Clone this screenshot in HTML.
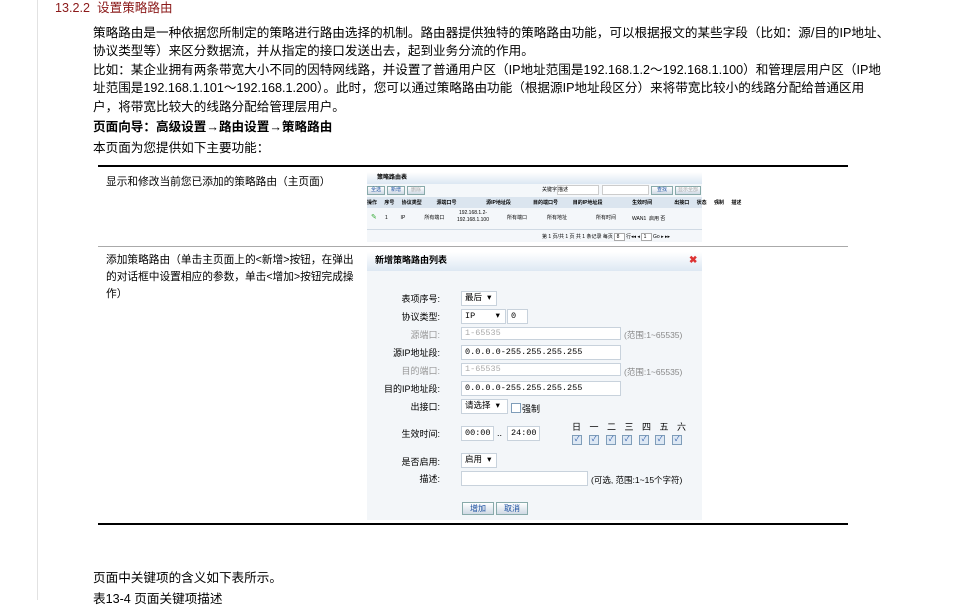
<!DOCTYPE html>
<html><head><meta charset="utf-8"><style>
body{margin:0;width:962px;height:600px;overflow:hidden;background:#fff;position:relative;font-family:"Liberation Sans","Noto Sans CJK SC",sans-serif;color:#000}
.a{position:absolute;white-space:nowrap}
.t{font-size:12.6px;left:93px}
.s{font-size:10.7px}
.f{font-size:8px;font-family:"Liberation Sans","Noto Sans CJK SC",sans-serif}
.lbl{position:absolute;font-size:9px;text-align:right;width:70px;left:370px}
.box{position:absolute;background:#fff;border:1px solid #c8d2dc;font-size:8.5px;line-height:13px;padding-left:3px;box-sizing:border-box;height:15px;font-family:"Liberation Mono","Noto Sans CJK SC",monospace}
.cb{position:absolute;width:8px;height:8px;border:1px solid #7f9db9;background:#dde8f4;font-size:7px;line-height:8px;text-align:center;color:#2050a0}
.btn{position:absolute;height:11px;border:1px solid #8aa;background:linear-gradient(#fff,#cfd9e4);font-size:8px;line-height:11px;text-align:center;color:#1a4fa0}
</style></head><body>
<div class="a" style="left:37px;top:0;width:1px;height:600px;background:#e2e2e2"></div>
<div class="a" style="left:55px;top:-3px;font-size:12.6px;color:#8b1a1a">13.2.2&nbsp; 设置策略路由</div>
<div class="a t" style="top:22px">策略路由是一种依据您所制定的策略进行路由选择的机制。路由器提供独特的策略路由功能，可以根据报文的某些字段（比如：源/目的IP地址、</div>
<div class="a t" style="top:40px">协议类型等）来区分数据流，并从指定的接口发送出去，起到业务分流的作用。</div>
<div class="a t" style="top:59px">比如：某企业拥有两条带宽大小不同的因特网线路，并设置了普通用户区（IP地址范围是192.168.1.2～192.168.1.100）和管理层用户区（IP地</div>
<div class="a t" style="top:77px">址范围是192.168.1.101～192.168.1.200）。此时，您可以通过策略路由功能（根据源IP地址段区分）来将带宽比较小的线路分配给普通区用</div>
<div class="a t" style="top:96px">户，将带宽比较大的线路分配给管理层用户。</div>
<div class="a t" style="top:116px;font-weight:bold">页面向导：高级设置→路由设置→策略路由</div>
<div class="a t" style="top:137px">本页面为您提供如下主要功能：</div>

<div class="a" style="left:98px;top:165px;width:750px;height:2px;background:#000"></div>
<div class="a" style="left:98px;top:246px;width:750px;height:1px;background:#aaa"></div>
<div class="a" style="left:98px;top:523px;width:750px;height:2px;background:#000"></div>
<div class="a s" style="left:106px;top:174px">显示和修改当前您已添加的策略路由（主页面）</div>
<div class="a s" style="left:106px;top:252px;line-height:17px;white-space:normal;width:256px">添加策略路由（单击主页面上的&lt;新增&gt;按钮，在弹出的对话框中设置相应的参数，单击&lt;增加&gt;按钮完成操作）</div>

<!-- screenshot 1 -->
<div class="a" style="left:367px;top:172px;width:335px;height:70px;background:#f4f7fa">
 <div class="a f" style="left:0;top:0;width:335px;height:12px;background:linear-gradient(#fff,#dbe7f3);font-weight:bold;line-height:12px;padding-left:10px;box-sizing:border-box;font-size:6px">策略路由表</div>
 <div class="btn" style="left:0;top:14px;width:16px;height:7px;line-height:7px;font-size:5px">全选</div>
 <div class="btn" style="left:20px;top:14px;width:16px;height:7px;line-height:7px;font-size:5px">新增</div>
 <div class="btn" style="left:40px;top:14px;width:16px;height:7px;line-height:7px;font-size:5px;color:#aaa">删除</div>
 <div class="a" style="left:175px;top:14px;font-size:5px">关键字:</div>
 <div class="a" style="left:190px;top:13px;width:40px;height:8px;background:#fff;border:1px solid #ccc;font-size:5px">描述</div>
 <div class="a" style="left:235px;top:13px;width:45px;height:8px;background:#fff;border:1px solid #ccc"></div>
 <div class="btn" style="left:284px;top:14px;width:20px;height:7px;line-height:7px;font-size:5px">查找</div>
 <div class="btn" style="left:308px;top:14px;width:24px;height:7px;line-height:7px;font-size:5px;color:#aaa">显示全部</div>
 <div class="a" style="left:0;top:25px;width:335px;height:11px;background:#dbe5ef"></div>
 <div class="a" style="left:0;top:27px;font-size:5px;font-weight:bold;word-spacing:6px">操作 序号 协议类型 &nbsp;源端口号 &nbsp;&nbsp;&nbsp;源IP地址段 &nbsp;&nbsp;目的端口号 &nbsp;目的IP地址段 &nbsp;&nbsp;&nbsp;生效时间 &nbsp;&nbsp;出接口 状态 强制 描述</div>
 <div class="a" style="left:4px;top:41px;font-size:7px;color:#3a3">✎</div>
 <div class="a" style="left:18px;top:42px;font-size:5px;word-spacing:5px">1 &nbsp;IP &nbsp;&nbsp;所有端口</div>
 <div class="a" style="left:90px;top:38px;font-size:5px;line-height:7px;text-align:center">192.168.1.2-<br>192.168.1.100</div>
 <div class="a" style="left:140px;top:42px;font-size:5px">所有端口</div>
 <div class="a" style="left:180px;top:42px;font-size:5px">所有地址</div>
 <div class="a" style="left:229px;top:42px;font-size:5px">所有时间</div>
 <div class="a" style="left:265px;top:43px;font-size:5px">WAN1 &nbsp;启用 否</div>
 <div class="a" style="left:0;top:57px;width:335px;height:1px;background:#d0dae4"></div>
 <div class="a" style="left:175px;top:61px;font-size:5px">第 1 页/共 1 页 共 1 条记录 每页 <span style="border:1px solid #aaa;background:#fff">&nbsp;8&nbsp;&nbsp;&nbsp;</span> 行◂◂ ◂ <span style="border:1px solid #aaa;background:#fff">&nbsp;1&nbsp;&nbsp;&nbsp;</span> Go ▸ ▸▸</div>
</div>

<!-- dialog -->
<div class="a" style="left:367px;top:252px;width:335px;height:268px;background:#f3f6f9">
 <div class="a" style="left:0;top:0;width:335px;height:19px;background:linear-gradient(#fff,#dde8f3);font-size:9px;font-weight:bold;line-height:17px;padding-left:8px;box-sizing:border-box">新增策略路由列表</div>
 <div class="a" style="left:322px;top:3px;font-size:10px;color:#d33;font-weight:bold">✖</div>
</div>
<div class="lbl" style="top:292px">表项序号:</div>
<div class="box" style="left:461px;top:291px;width:36px">最后 ▾</div>
<div class="lbl" style="top:310px">协议类型:</div>
<div class="box" style="left:461px;top:309px;width:45px">IP&nbsp;&nbsp;&nbsp;&nbsp;▾</div>
<div class="box" style="left:507px;top:309px;width:21px">0</div>
<div class="lbl" style="top:328px;color:#999">源端口:</div>
<div class="box" style="left:461px;top:327px;width:160px;height:13px;line-height:11px;color:#aaa">1-65535</div>
<div class="a" style="left:624px;top:329px;font-size:8.5px;color:#888">(范围:1~65535)</div>
<div class="lbl" style="top:346px">源IP地址段:</div>
<div class="box" style="left:461px;top:345px;width:160px">0.0.0.0-255.255.255.255</div>
<div class="lbl" style="top:364px;color:#999">目的端口:</div>
<div class="box" style="left:461px;top:363px;width:160px;height:13px;line-height:11px;color:#aaa">1-65535</div>
<div class="a" style="left:624px;top:366px;font-size:8.5px;color:#888">(范围:1~65535)</div>
<div class="lbl" style="top:382px">目的IP地址段:</div>
<div class="box" style="left:461px;top:381px;width:160px">0.0.0.0-255.255.255.255</div>
<div class="lbl" style="top:400px">出接口:</div>
<div class="box" style="left:461px;top:399px;width:47px">请选择 ▾</div>
<div class="cb" style="left:511px;top:403px;background:#fff"></div>
<div class="a" style="left:522px;top:402px;font-size:9px">强制</div>
<div class="lbl" style="top:427px">生效时间:</div>
<div class="box" style="left:461px;top:426px;width:33px">00:00</div>
<div class="a" style="left:497px;top:428px;font-size:9px">..</div>
<div class="box" style="left:507px;top:426px;width:33px">24:00</div>
<div class="a" style="left:572px;top:420px;font-size:9px;word-spacing:6px;letter-spacing:0">日 一 二 三 四 五 六</div>
<div class="cb" style="left:572px;top:435px">✓</div><div class="cb" style="left:589px;top:435px">✓</div><div class="cb" style="left:606px;top:435px">✓</div><div class="cb" style="left:622px;top:435px">✓</div><div class="cb" style="left:639px;top:435px">✓</div><div class="cb" style="left:655px;top:435px">✓</div><div class="cb" style="left:672px;top:435px">✓</div>
<div class="lbl" style="top:455px">是否启用:</div>
<div class="box" style="left:461px;top:453px;width:36px">启用 ▾</div>
<div class="lbl" style="top:472px">描述:</div>
<div class="box" style="left:461px;top:471px;width:127px"></div>
<div class="a" style="left:591px;top:474px;font-size:8.5px">(可选, 范围:1~15个字符)</div>
<div class="btn" style="left:462px;top:502px;width:30px">增加</div>
<div class="btn" style="left:496px;top:502px;width:30px">取消</div>

<div class="a t" style="top:567px">页面中关键项的含义如下表所示。</div>
<div class="a t" style="top:588px">表13-4  页面关键项描述</div>
</body></html>
